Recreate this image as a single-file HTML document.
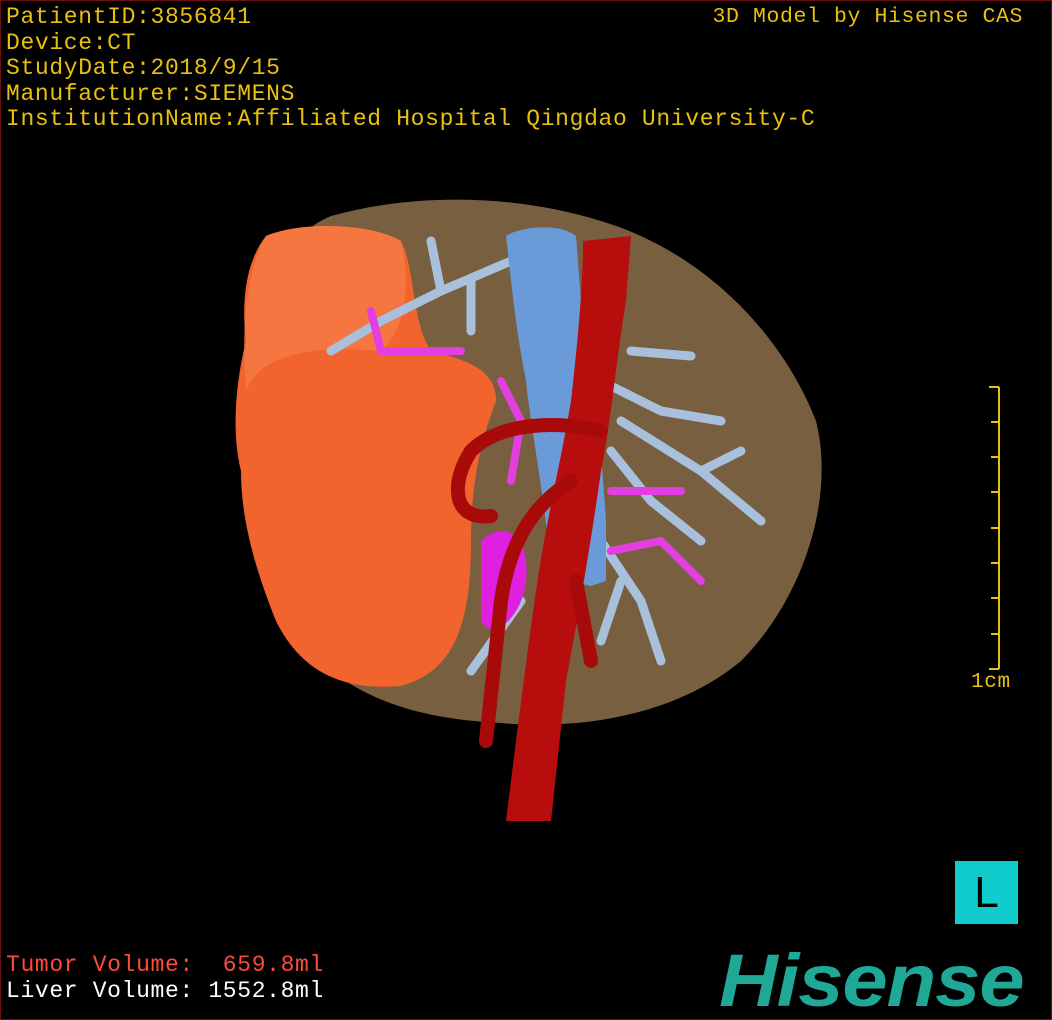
<!DOCTYPE html>
<html><head><meta charset="utf-8"><style>
html,body{margin:0;padding:0;background:#000;}
#v{position:relative;width:1050px;height:1018px;border:1px solid #6a1010;overflow:hidden;background:#000;font-family:"Liberation Mono",monospace;}
.t{position:absolute;font-size:23px;line-height:25.5px;color:#e8c010;white-space:pre;letter-spacing:0.65px;}
</style></head><body><div id="v">
<svg width="1050" height="1018" style="position:absolute;left:0;top:0">
<path d="M330 215 C420 190 520 195 600 220 C700 250 780 330 815 420 C835 500 800 600 740 660 C680 710 590 730 500 722 C420 718 370 700 330 670 C280 620 245 520 245 420 C245 320 270 240 330 215Z" fill="#7e6442" opacity="0.95"/>
<path d="M265 235 C300 220 370 222 400 240 C415 270 410 320 430 350 C470 360 495 370 495 400 C480 440 470 480 470 540 C470 620 455 670 400 685 C340 690 300 670 275 620 C255 570 240 520 240 470 C230 430 235 380 245 340 C240 300 245 260 265 235Z" fill="#f2642e"/>
<path d="M265 235 C300 220 370 222 400 240 C410 280 405 330 380 350 C320 345 260 350 245 390 C240 330 245 270 265 235Z" fill="#f57a45" opacity="0.8"/>
<g stroke="#a8c0dc" stroke-width="9" fill="none" stroke-linecap="round">
<path d="M510 260 L440 290 L380 320 L330 350"/><path d="M440 290 L430 240"/><path d="M470 280 L470 330"/>
<path d="M600 380 L660 410 L720 420"/><path d="M620 420 L700 470 L760 520"/><path d="M700 470 L740 450"/>
<path d="M610 450 L650 500 L700 540"/><path d="M600 540 L640 600 L660 660"/><path d="M620 580 L600 640"/>
<path d="M630 350 L690 355"/><path d="M520 600 L470 670"/>
</g>
<g stroke="#e23ee0" stroke-width="8" fill="none" stroke-linecap="round">
<path d="M370 310 L380 350 L460 350"/><path d="M500 380 L520 420 L510 480"/><path d="M610 490 L680 490"/><path d="M610 550 L660 540 L700 580"/>
</g>
<path d="M480 540 C500 520 530 530 525 580 C520 620 490 640 480 620Z" fill="#e020e0"/>
<path d="M505 235 C520 225 560 222 575 235 L580 300 C590 360 600 440 605 520 L605 580 L590 585 L550 575 C545 500 530 430 525 380 C515 330 510 280 505 235Z" fill="#6a9ad8"/>
<path d="M582 240 L630 235 L625 300 C615 360 610 420 600 470 C590 540 580 600 565 680 L550 820 L505 820 C515 740 525 660 535 590 C545 520 560 460 570 400 C578 330 582 280 582 240Z" fill="#b80d0d"/>
<g stroke="#a80a0a" stroke-width="14" fill="none" stroke-linecap="round">
<path d="M600 430 C560 420 500 420 470 450 C450 480 450 520 490 515"/>
<path d="M570 480 C540 500 510 530 500 600 L485 740"/>
<path d="M575 580 L590 660"/>
</g>
<g stroke="#e8c010" stroke-width="2">
<line x1="998" y1="386" x2="998" y2="668"/>
<line x1="988" y1="386" x2="998" y2="386"/><line x1="990" y1="421" x2="998" y2="421"/><line x1="990" y1="456" x2="998" y2="456"/><line x1="990" y1="491" x2="998" y2="491"/><line x1="990" y1="527" x2="998" y2="527"/><line x1="990" y1="562" x2="998" y2="562"/><line x1="990" y1="597" x2="998" y2="597"/><line x1="990" y1="633" x2="998" y2="633"/><line x1="988" y1="668" x2="998" y2="668"/>
</g>
</svg>
<div class="t" style="left:5px;top:4px">PatientID:3856841
Device:CT
StudyDate:2018/9/15
Manufacturer:SIEMENS
InstitutionName:Affiliated Hospital Qingdao University-C</div>
<div class="t" style="right:28px;top:4px;font-size:21.5px;letter-spacing:0.6px;">3D Model by Hisense CAS</div>
<div class="t" style="left:970px;top:669px;font-size:21px;">1cm</div>
<div style="position:absolute;left:954px;top:860px;width:63px;height:63px;background:#10cccc;color:#000;font:44px/63px 'Liberation Sans',sans-serif;text-align:center;">L</div>
<div class="t" style="left:5px;top:952px;color:#ff4a3a;">Tumor Volume:  659.8ml</div>
<div class="t" style="left:5px;top:978px;color:#fff;">Liver Volume: 1552.8ml</div>
<div style="position:absolute;left:718px;top:940px;color:#1fa896;font:italic bold 74px/80px 'Liberation Sans',sans-serif;letter-spacing:-1px;transform:scaleX(1.1);transform-origin:left top;">Hisense</div>
</div></body></html>
